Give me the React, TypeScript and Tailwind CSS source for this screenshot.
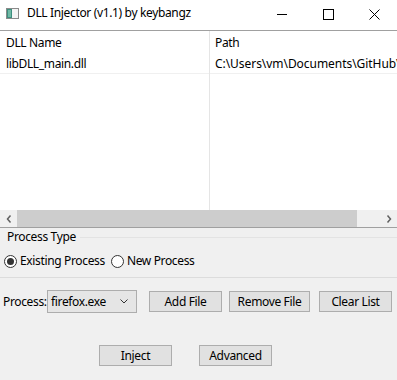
import React from "react";

const font = { fontFamily: '"Segoe UI", "Noto Sans", sans-serif', letterSpacing: "-0.35px" };

function Btn({ label, w }: { label: string; w: string }) {
  return (
    <div
      className={`${w} h-[21px] bg-[#e1e1e1] border border-[#adadad] flex items-center justify-center text-[12px] text-black leading-none whitespace-nowrap`}
    >
      {label}
    </div>
  );
}

export default function App() {
  return (
    <div
      className="w-[397px] h-[380px] bg-[#f0f0f0] flex flex-col overflow-hidden text-[12px] text-black"
      style={font}
    >
      {/* Title bar */}
      <div className="h-[30px] bg-white flex items-start shrink-0">
        <div className="flex items-center pt-[7px] pl-[6px] gap-[8px]">
          <svg width="13" height="11" viewBox="0 0 13 11">
            <rect x="0.5" y="0.5" width="12" height="10" fill="#f4f4f4" stroke="#8a8a8a" />
            <rect x="1" y="1" width="5" height="9" fill="#3e8e7e" />
            <rect x="2" y="2" width="3" height="7" fill="#6fb9a5" />
          </svg>
          <span className="leading-none">DLL Injector (v1.1) by keybangz</span>
        </div>
        <div className="ml-auto flex">
          <div className="w-[46px] h-[29px] flex items-center justify-center">
            <svg width="10" height="10" viewBox="0 0 10 10">
              <line x1="0" y1="4.5" x2="10" y2="4.5" stroke="#000" strokeWidth="1" />
            </svg>
          </div>
          <div className="w-[46px] h-[29px] flex items-center justify-center">
            <svg width="11" height="11" viewBox="0 0 11 11">
              <rect x="0.5" y="0.5" width="10" height="10" fill="none" stroke="#000" strokeWidth="1" />
            </svg>
          </div>
          <div className="w-[46px] h-[29px] flex items-center justify-center">
            <svg width="11" height="11" viewBox="0 0 11 11">
              <line x1="0.5" y1="0.5" x2="10.5" y2="10.5" stroke="#000" strokeWidth="1" />
              <line x1="10.5" y1="0.5" x2="0.5" y2="10.5" stroke="#000" strokeWidth="1" />
            </svg>
          </div>
        </div>
      </div>
      <div className="h-px bg-[#a0a0a0] shrink-0" />

      {/* List */}
      <div className="h-[179px] bg-white flex shrink-0 overflow-hidden">
        <div className="w-[210px] border-r border-[#e5e5e5] flex flex-col shrink-0">
          <div className="h-[24px] flex items-center pl-[6px]">DLL Name</div>
          <div className="h-[19px] flex items-center pl-[6px] border-b border-[#f0f0f0]">
            libDLL_main.dll
          </div>
        </div>
        <div className="flex-1 flex flex-col min-w-0">
          <div className="h-[24px] flex items-center pl-[5px]">Path</div>
          <div className="h-[19px] flex items-center pl-[5px] border-b border-[#f0f0f0] whitespace-nowrap overflow-hidden tracking-[-0.05px]">
            C:\Users\vm\Documents\GitHub\libDLL_main.dll
          </div>
        </div>
      </div>

      {/* Scrollbar */}
      <div className="h-[17px] bg-[#f0f0f0] flex shrink-0">
        <div className="w-[17px] flex items-center justify-center">
          <svg width="6" height="8" viewBox="0 0 6 8">
            <polyline points="4.5,0.5 1.5,4 4.5,7.5" fill="none" stroke="#606060" strokeWidth="1.5" />
          </svg>
        </div>
        <div className="w-[340px] bg-[#cdcdcd]" />
        <div className="flex-1" />
        <div className="w-[17px] flex items-center justify-center">
          <svg width="6" height="8" viewBox="0 0 6 8">
            <polyline points="1.5,0.5 4.5,4 1.5,7.5" fill="none" stroke="#606060" strokeWidth="1.5" />
          </svg>
        </div>
      </div>
      <div className="h-px bg-[#a0a0a0] shrink-0" />

      {/* Group box */}
      <div className="h-[50px] flex flex-col border-b border-[#dcdcdc] shrink-0">
        <div className="h-[17px] flex items-center pl-[7px] gap-[4px] pt-[1px]">
          <span className="leading-none">Process Type</span>
          <div className="flex-1 h-px bg-[#e3e3e3]" />
        </div>
        <div className="flex items-center pl-[4px] mt-[8px] h-[16px]">
          <svg width="13" height="13" viewBox="0 0 13 13">
            <circle cx="6.5" cy="6.5" r="6" fill="#fff" stroke="#333" strokeWidth="1" />
            <circle cx="6.5" cy="6.5" r="3.5" fill="#333" />
          </svg>
          <span className="ml-[3px]">Existing Process</span>
          <svg width="13" height="13" viewBox="0 0 13 13" className="ml-[6px]">
            <circle cx="6.5" cy="6.5" r="6" fill="#fff" stroke="#333" strokeWidth="1" />
          </svg>
          <span className="ml-[3px]">New Process</span>
        </div>
      </div>

      {/* Process row */}
      <div className="flex items-center mt-[12px] h-[23px] shrink-0">
        <span className="pl-[3px] w-[47px] shrink-0 whitespace-nowrap">Process:</span>
        <div className="w-[90px] h-[23px] bg-[#e5e5e5] border border-[#adadad] flex items-center pl-[3px] pr-[8px] shrink-0">
          <span>firefox.exe</span>
          <svg width="8" height="5" viewBox="0 0 8 5" className="ml-auto">
            <polyline points="0.5,0.5 4,4 7.5,0.5" fill="none" stroke="#333" strokeWidth="1" />
          </svg>
        </div>
        <div className="ml-[12px]">
          <Btn label="Add File" w="w-[73px]" />
        </div>
        <div className="ml-[7px]">
          <Btn label="Remove File" w="w-[81px]" />
        </div>
        <div className="ml-[9px]">
          <Btn label="Clear List" w="w-[73px]" />
        </div>
      </div>

      {/* Bottom buttons */}
      <div className="flex items-center mt-[32px] shrink-0">
        <div className="ml-[99px]">
          <Btn label="Inject" w="w-[73px]" />
        </div>
        <div className="ml-[27px]">
          <Btn label="Advanced" w="w-[73px]" />
        </div>
      </div>
    </div>
  );
}
